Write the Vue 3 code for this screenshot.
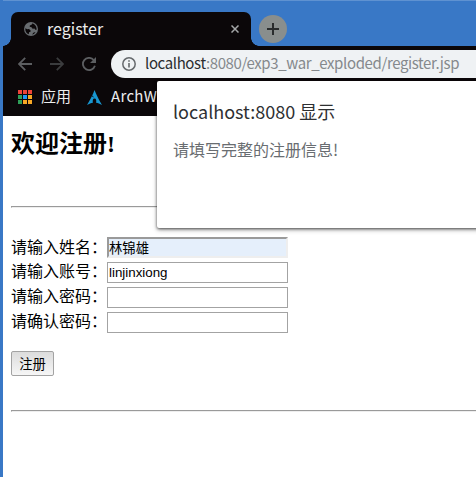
<script setup>
import { ref } from 'vue'

const dots = ['#ee4338', '#ee4338', '#ee4338', '#2f9e58', '#2196f3', '#f9a825', '#2f9e58', '#f9a825', '#f9a825']
const fields = ref([
  { id: 'name', label: '请输入姓名：', type: 'text', value: '林锦雄', filled: true },
  { id: 'account', label: '请输入账号：', type: 'text', value: 'linjinxiong' },
  { id: 'password', label: '请输入密码：', type: 'password', value: '' },
  { id: 'confirm', label: '请确认密码：', type: 'password', value: '' },
])
</script>

<template>
  <div class="window">
    <header class="tabs">
      <div class="tab">
        <svg class="globe" viewBox="0 0 14 14" width="14" height="14">
          <circle cx="7" cy="7" r="7" fill="#686c70" />
          <path d="M1.3 6.2 3.4 7.2 5 7.1 6.6 8.4 6.5 9.7 5 10.2 4.8 12.3 C2.6 11.5 1.1 9.5 1.3 6.2Z M8.2 1.5 7.6 2.8 5.8 3.4 5.7 4.7 7.5 5.2 8.6 6.8 10.5 6.5 11.3 7.8 12.6 7.8 C12.9 4.8 11.2 2.1 8.2 1.5Z M8.2 12.6 9.3 10.8 11.5 10.1 C10.7 11.5 9.7 12.3 8.2 12.6Z" fill="#0b0709" />
        </svg>
        <span class="tab-title">register</span>
        <svg class="close" viewBox="0 0 8 8" width="8" height="8"><path d="M.5.5 7.5 7.5M7.5.5.5 7.5" stroke="#a5a7a8" stroke-width="1.5" /></svg>
      </div>
      <button class="new-tab" aria-label="+">
        <svg viewBox="0 0 12 12" width="12" height="12"><path d="M6 0V12M0 6H12" stroke="#292c2d" stroke-width="2" /></svg>
      </button>
    </header>
    <nav class="toolbar">
      <svg class="back" viewBox="0 0 14 14" width="14" height="14"><path d="M14 7H1M7.2.8 1 7l6.2 6.2" fill="none" stroke="#5c5e61" stroke-width="1.8" /></svg>
      <svg class="forward" viewBox="0 0 14 14" width="14" height="14"><path d="M0 7H13M6.8.8 13 7l-6.2 6.2" fill="none" stroke="#3b3c3e" stroke-width="1.8" /></svg>
      <svg class="reload" viewBox="0 0 14 14" width="14" height="14"><path d="M11.7 3A6.1 6.1 0 1 0 12.9 8.7" fill="none" stroke="#5c5e61" stroke-width="1.8" /><path d="M14 0V6H8Z" fill="#5c5e61" /></svg>
      <div class="address">
        <svg viewBox="0 0 14 14" width="14" height="14"><circle cx="7" cy="7" r="6.2" fill="none" stroke="#65696c" stroke-width="1.5" /><path d="M7 6V10.6M7 3.3V4.8" stroke="#65696c" stroke-width="1.6" /></svg>
        <span class="url"><b>localhost</b>:8080/exp3_war_exploded/register.jsp</span>
      </div>
    </nav>
    <div class="bookmarks">
      <div class="apps"><i v-for="(color, i) in dots" :key="i" :style="{ background: color }"></i></div>
      <span class="apps-label">应用</span>
      <svg class="arch" viewBox="0 0 15 15" width="15" height="15"><path d="M7.5 0C6.7 2.2 6.1 3.7 5.2 5.6 5.8 6.3 6.5 7 7.4 7.5 6.3 7.2 5.4 6.7 4.8 6.2 3.6 8.7 2.1 11.6 0 15 2.2 13.8 4.1 13 5.9 12.7 5.4 10.4 5.9 8.7 7.5 8.6 9.1 8.7 9.6 10.4 9.1 12.7 11 13 12.9 13.8 15 15 11.4 8.8 9.2 4.5 7.5 0Z" fill="#1796d1" /></svg>
      <span class="bookmark">ArchWiki</span>
    </div>
    <main>
      <h2>欢迎注册!</h2>
      <hr />
      <form @submit.prevent>
        <div v-for="field in fields" :key="field.id" class="row">
          <label :for="field.id">{{ field.label }}</label>
          <input :id="field.id" v-model="field.value" :type="field.type" :class="{ filled: field.filled }" />
        </div>
        <button class="submit">注册</button>
      </form>
      <hr />
    </main>
    <section class="dialog" role="alertdialog">
      <h1>localhost:8080 显示</h1>
      <p>请填写完整的注册信息!</p>
    </section>
  </div>
</template>

<style>
body { margin: 0; background: #fff; }
</style>

<style scoped>
* { box-sizing: border-box; }
.window { position: relative; width: 476px; height: 477px; overflow: hidden; border-left: 3px solid #3978c6; background: #fff; font-family: "Noto Sans CJK SC", sans-serif; }
.window::before { content: ""; position: absolute; z-index: 2; left: -3px; top: 0; width: 1px; height: 100%; background: #5a8dcd; }
svg { display: block; flex: none; }
.tabs { display: flex; height: 46px; padding: 11px 0 0 8px; background: #3978c6; border-top: 1px solid #5f92d1; }
.tab { position: relative; display: flex; align-items: center; width: 240px; height: 34px; padding: 0 12px 0 13px; border-radius: 7px 7px 0 0; background: #0b0709; color: #eceded; }
.tab::before, .tab::after { content: ""; position: absolute; bottom: 0; width: 8px; height: 8px; }
.tab::before { left: -8px; background: radial-gradient(circle at 0 0, transparent 7.5px, #0b0709 8px); }
.tab::after { right: -8px; background: radial-gradient(circle at 100% 0, transparent 7.5px, #0b0709 8px); }
.tab-title { margin-left: 9px; padding-bottom: 3px; font-size: 16px; line-height: 24px; }
.close { margin-left: auto; }
.new-tab { display: flex; align-items: center; justify-content: center; width: 28px; height: 28px; margin: 3px 0 0 8px; padding: 0; border: 0; border-radius: 50%; background: #898e8d; }
.toolbar { display: flex; align-items: center; height: 35px; padding-left: 15px; background: #0b0709; }
.forward { margin-left: 18px; }
.reload { margin-left: 18px; }
.address { display: flex; align-items: center; flex: 1; height: 28px; margin-left: 15px; padding-left: 11px; border-radius: 14px 0 0 14px; background: #eff2f4; }
.url { margin-left: 9px; padding-bottom: 2px; font-size: 15px; letter-spacing: -0.38px; line-height: 24px; color: #85898c; white-space: nowrap; }
.url b { font-weight: 400; color: #2b2d2f; }
.bookmarks { display: flex; align-items: center; height: 35px; padding: 0 0 3px 15px; background: #0b0709; color: #eceded; font-size: 15px; line-height: 22px; }
.apps { display: grid; grid-template-columns: repeat(3, 4px); gap: 1px; }
.apps i { width: 4px; height: 4px; }
.apps-label { margin: 0 16px 0 9px; padding-bottom: 2px; }
.bookmark { padding-bottom: 2px; letter-spacing: 0.3px; }
.arch { margin-right: 9px; }
main { padding: 0 0 0 8px; font-family: "Liberation Serif", "Noto Sans CJK SC", serif; color: #000; }
h2 { margin: 0; padding-top: 11px; height: 90px; font-size: 24px; line-height: 35px; }
hr { height: 2px; margin: 0; border: 1px solid; border-color: #9a9a9a #eee #eee #9a9a9a; border-right: 0; }
form { height: 202px; padding-top: 27px; }
.row { display: flex; align-items: center; height: 25px; }
label { width: 96px; font-size: 16px; line-height: 24px; white-space: nowrap; }
.row + .row label { padding-bottom: 2px; }
input { width: 181px; height: 21px; padding: 1px; border: 1px solid #a3a3a3; border-radius: 0; background: #fff; color: #000; outline: 0; font: 13.333px "Liberation Sans", "Noto Sans CJK SC", sans-serif; }
input.filled { padding: 0; border: 2px solid; border-color: #9a9a9a #eee #eee #9a9a9a; background: #e5effb; }
.submit { display: block; width: 43px; height: 25px; margin-top: 16px; padding: 2px 0 0; border: 1px solid #a3a3a3; border-radius: 2px; background: linear-gradient(#dcdcdc, #f6f6f6); color: #000; font: 13.333px/20px "Liberation Sans", "Noto Sans CJK SC", sans-serif; }
.dialog { position: absolute; left: 154px; top: 81px; width: 448px; height: 147px; padding: 15px 16px; border-radius: 2px; background: #fff; box-shadow: 0 1px 3px #0009, 0 2px 5px #0004; }
.dialog h1 { margin: 0; font-size: 18px; font-weight: 400; line-height: 30px; color: #2e3032; }
.dialog p { margin: 9px 0 0; font-size: 16px; line-height: 28px; color: #696d71; }
</style>
